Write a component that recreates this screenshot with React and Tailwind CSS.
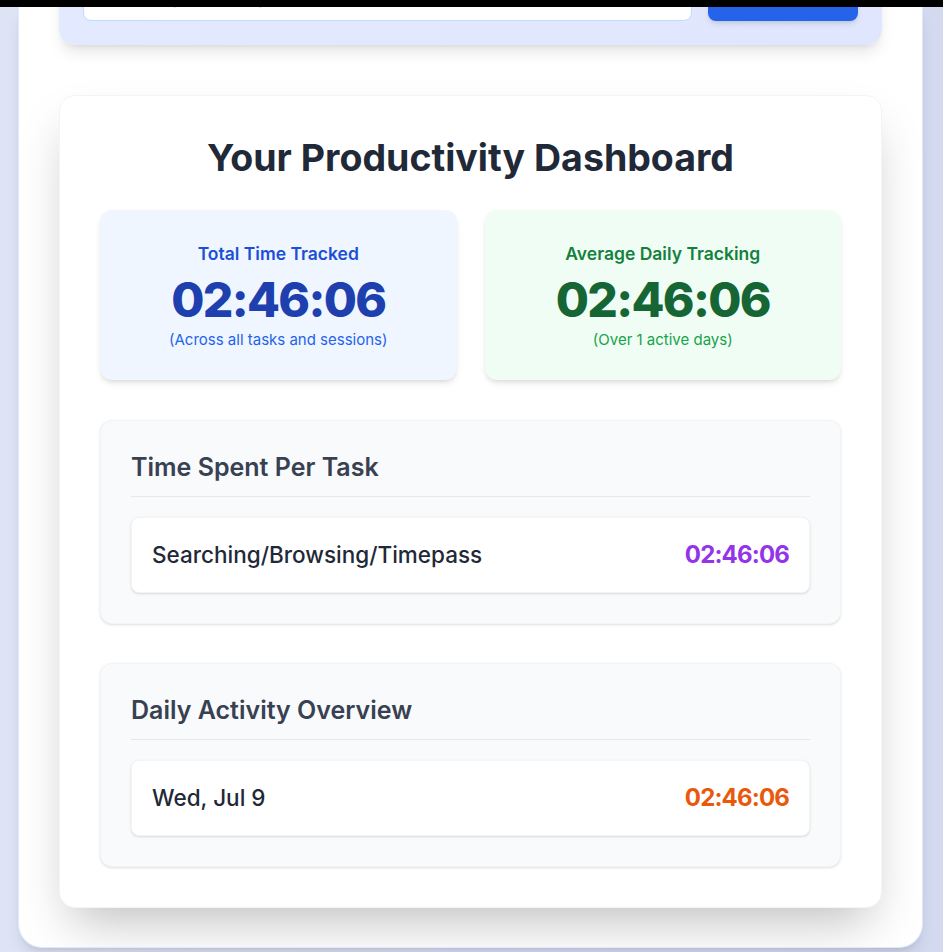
export default function App() {
  const tasks = [{ name: 'Searching/Browsing/Timepass', time: '02:46:06' }];
  const days = [{ label: 'Wed, Jul 9', time: '02:46:06' }];

  return (
    <div className="min-h-screen bg-gradient-to-r from-[#dee4f6] to-[#d3d9ef] font-['Inter','Noto_Sans',sans-serif]">
      <div className="relative z-10 h-[7px] bg-black" />
      <div className="ml-[18px] w-[905px] h-[941px] overflow-hidden rounded-b-3xl border border-t-0 border-[#dbeafe] bg-white px-10 shadow-lg">
        {/* task input panel, scrolled mostly out of view */}
        <div className="-mt-[56px] flex gap-4 rounded-2xl bg-gradient-to-r from-[#e3e9fe] to-[#e0e6fd] p-6 shadow-lg">
          <input
            className="h-[46px] flex-1 rounded-lg border border-[#bfdbfe] bg-white px-4"
            placeholder="What are you working on?"
          />
          <button className="h-[46px] w-[150px] rounded-lg bg-[#2563eb] font-semibold text-white shadow-md">
            Start
          </button>
        </div>

        <div className="mt-[50px] rounded-2xl border border-gray-100 bg-white p-10 shadow-2xl">
          <h2 className="mb-[30px] text-center text-[37.5px] leading-[44px] font-bold text-[#1f2937]">Your Productivity Dashboard</h2>

          <div className="grid grid-cols-2 gap-7">
            <div className="flex h-[170px] flex-col items-center justify-center rounded-xl bg-[#eff6ff] shadow-md">
              <p className="text-[17.5px] leading-7 font-semibold text-[#1d4ed8]">Total Time Tracked</p>
              <p className="mt-2 text-5xl leading-none font-extrabold tracking-[-0.035em] text-[#1e40af]">02:46:06</p>
              <p className="mt-1.5 text-[15px] leading-5 text-[#2563eb]">(Across all tasks and sessions)</p>
            </div>
            <div className="flex h-[170px] flex-col items-center justify-center rounded-xl bg-[#f0fdf4] shadow-md">
              <p className="text-[17.5px] leading-7 font-semibold text-[#15803d]">Average Daily Tracking</p>
              <p className="mt-2 text-5xl leading-none font-extrabold tracking-[-0.035em] text-[#166534]">02:46:06</p>
              <p className="mt-1.5 text-[15px] leading-5 text-[#16a34a]">(Over 1 active days)</p>
            </div>
          </div>

          <div className="mt-10 rounded-xl border border-gray-100 bg-[#f9fafb] p-[30px] shadow-sm">
            <h3 className="mb-5 border-b border-[#e5e7eb] pb-3 text-[25px] leading-[33px] font-semibold text-[#374151]">Time Spent Per Task</h3>
            {tasks.map((t) => (
              <div key={t.name} className="flex h-[76px] items-center justify-between rounded-lg border border-gray-100 bg-white px-5 shadow-sm">
                <span className="text-[22.5px] font-medium text-[#1f2937]">{t.name}</span>
                <span className="text-2xl font-bold tracking-[-0.035em] text-[#9333ea]">{t.time}</span>
              </div>
            ))}
          </div>

          <div className="mt-[39px] rounded-xl border border-gray-100 bg-[#f9fafb] p-[30px] shadow-sm">
            <h3 className="mb-5 border-b border-[#e5e7eb] pb-3 text-[25px] leading-[33px] font-semibold text-[#374151]">Daily Activity Overview</h3>
            {days.map((d) => (
              <div key={d.label} className="flex h-[76px] items-center justify-between rounded-lg border border-gray-100 bg-white px-5 shadow-sm">
                <span className="text-[22.5px] font-medium text-[#1f2937]">{d.label}</span>
                <span className="text-2xl font-bold tracking-[-0.035em] text-[#ea580c]">{d.time}</span>
              </div>
            ))}
          </div>
        </div>
      </div>
    </div>
  );
}
